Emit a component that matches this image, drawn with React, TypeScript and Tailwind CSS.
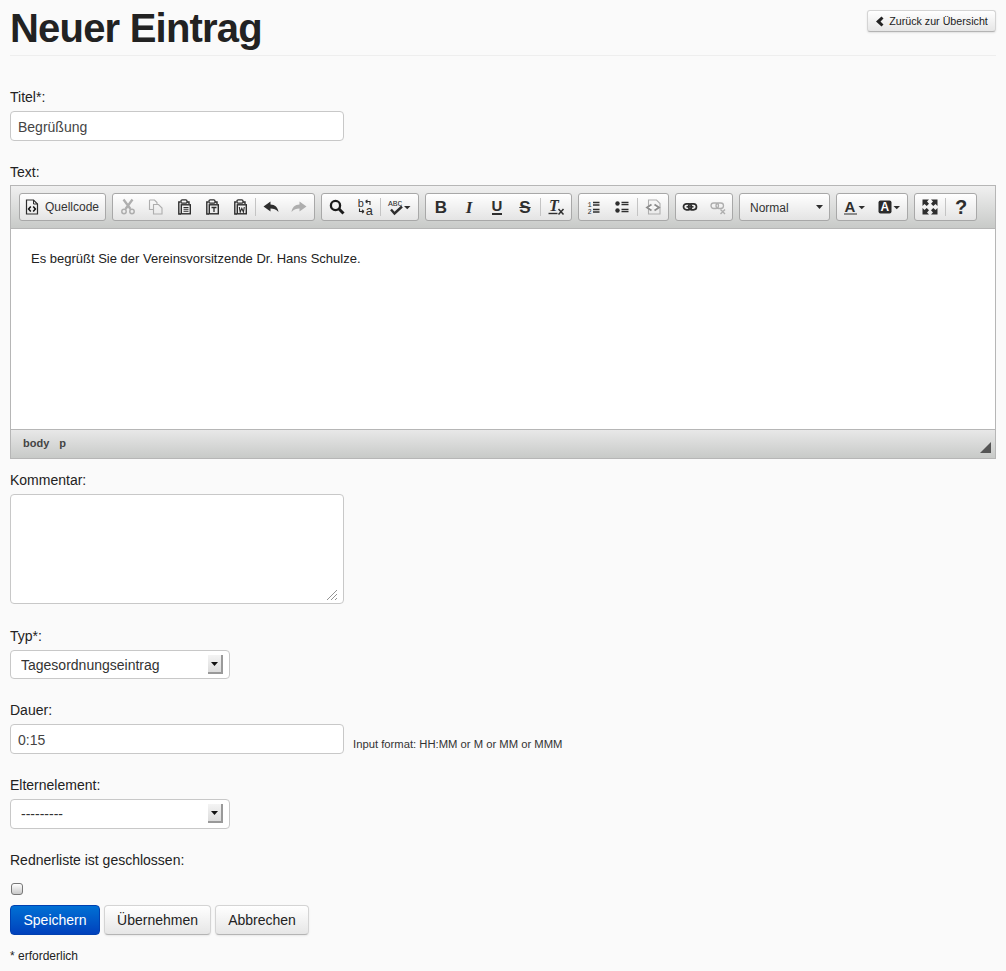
import type { ReactNode } from "react";

const dark = "#2e2e2e";
const gray = "#aeaeae";

function Ico({ children, w = 16 }: { children: ReactNode; w?: number }) {
  return (
    <svg width={w} height={16} viewBox={`0 0 ${w} 16`} fill="none" className="overflow-visible">
      {children}
    </svg>
  );
}

function Btn({ children, wide }: { children: ReactNode; wide?: boolean }) {
  return (
    <span className={`flex h-full items-center justify-center ${wide ? "w-[35px]" : "w-[28px]"}`}>
      {children}
    </span>
  );
}

function Sep() {
  return <span className="mx-px h-[18px] w-px bg-[#c4c4c4]" />;
}

function Group({ children, className = "px-[1px]" }: { children: ReactNode; className?: string }) {
  return (
    <div
      className={`flex h-[28px] items-center rounded-[3px] border border-[#a8a8a8] bg-gradient-to-b from-white to-[#e4e4e4] ${className}`}
    >
      {children}
    </div>
  );
}

function Arrow({ x = 0, y = 8 }: { x?: number; y?: number }) {
  return <path d={`M${x} ${y}h6.500l-3.250 3.300z`} fill={dark} />;
}

function Clipboard({ children }: { children: ReactNode }) {
  return (
    <Ico>
      <path d="M4.500 3H2.800v12H5M11 3h2v2" stroke={dark} strokeWidth="1.400" />
      <rect x="5" y="0.800" width="6" height="3.400" rx="1.200" stroke={dark} strokeWidth="1.300" />
      <rect x="5.300" y="5.800" width="9" height="9" stroke={dark} strokeWidth="1.400" />
      {children}
    </Ico>
  );
}

function Toolbar() {
  return (
    <div className="flex h-[43px] items-center gap-[6px] border-b border-[#b6b6b6] bg-gradient-to-b from-[#f0f0f0] to-[#c8cac8] px-[8px]">
      <Group className="w-[87px] pl-[4px]">
        <Ico>
          <path d="M2.500 1h7l4 4v10h-11z" stroke={dark} strokeWidth="1.200" />
          <path d="M9.500 1v4h4" stroke={dark} strokeWidth="1" />
          <path d="M6.800 7.500 4.600 10l2.200 2.400M9.200 7.500l2.200 2.500-2.200 2.400" stroke="#111" strokeWidth="1.500" />
        </Ico>
        <span className="ml-[5px] text-[12px] leading-none text-[#333]">Quellcode</span>
      </Group>

      <Group>
        <Btn>
          <Ico>
            <path d="M3.500 0.500 10.500 10M12.500 0.500 5.500 10" stroke={gray} strokeWidth="2.300" />
            <circle cx="4" cy="12.500" r="2.200" stroke={gray} strokeWidth="1.500" />
            <circle cx="12" cy="12.500" r="2.200" stroke={gray} strokeWidth="1.500" />
          </Ico>
        </Btn>
        <Btn>
          <Ico>
            <path d="M1.500 1h5l2.500 2.500V5.500M1.500 1v9.500H5" stroke={gray} strokeWidth="1.100" />
            <path d="M5.500 5.500H10.500l3.500 3.500v6H5.500z" stroke={gray} strokeWidth="1.100" />
          </Ico>
        </Btn>
        <Btn>
          <Clipboard>
            <path d="M7.500 8.500h5M7.500 10.300h5M7.500 12.200h5" stroke={dark} strokeWidth="1.100" />
          </Clipboard>
        </Btn>
        <Btn>
          <Clipboard>
            <path d="M7.500 8.500h5M10 8.500v4.500" stroke={dark} strokeWidth="1.300" />
          </Clipboard>
        </Btn>
        <Btn>
          <Clipboard>
            <path d="M7.300 8l.9 5 1.600-3.700L11.400 13l.9-5" stroke={dark} strokeWidth="1.100" />
          </Clipboard>
        </Btn>
        <Sep />
        <Btn>
          <Ico>
            <path d="M7.500 2.500 0.500 7.500l7 5V9.500c3.200 0 5.500.7 8 3.500-.5-4.500-3.500-7.500-8-7.500z" fill={dark} />
          </Ico>
        </Btn>
        <Btn>
          <Ico>
            <path d="M8.500 2.500l7 5-7 5V9.500c-3.200 0-5.500.7-8 3.500.5-4.500 3.500-7.500 8-7.500z" fill={gray} />
          </Ico>
        </Btn>
      </Group>

      <Group>
        <Btn>
          <Ico>
            <circle cx="6.500" cy="6.500" r="4.600" stroke="#1c1c1c" strokeWidth="2.300" />
            <path d="M9.800 9.800 14.500 14.500" stroke="#1c1c1c" strokeWidth="3" />
          </Ico>
        </Btn>
        <Btn>
          <Ico>
            <text x="0.500" y="7.500" fontSize="11" fontFamily="Liberation Mono, monospace" fill={dark}>b</text>
            <text x="8.500" y="16" fontSize="13" fontFamily="Liberation Mono, monospace" fill={dark}>a</text>
            <path d="M8.500 2.500h4.500v3.500M8.500 2.500 10.500 0.800M8.500 2.500l2 1.700" stroke={dark} strokeWidth="1.100" />
            <path d="M7 12.500H2.500V9.500M7 12.500l-2-1.700M7 12.500l-2 1.700" stroke={dark} strokeWidth="1.100" />
          </Ico>
        </Btn>
        <Sep />
        <Btn wide>
          <Ico w={24}>
            <text x="0" y="7" fontSize="8" fontFamily="Liberation Mono, monospace" fill={dark}>ABC</text>
            <path d="M3 10.500 6.500 14.500 14 7.500" stroke={dark} strokeWidth="2.400" />
            <Arrow x={16} y={7} />
          </Ico>
        </Btn>
      </Group>

      <Group>
        <Btn>
          <span className="text-[17px] font-bold leading-none text-[#2e2e2e]">B</span>
        </Btn>
        <Btn>
          <span className="text-[17px] font-bold italic leading-none text-[#2e2e2e] [font-family:'Liberation_Serif',serif]">I</span>
        </Btn>
        <Btn>
          <span className="border-b-2 border-[#2e2e2e] text-[15px] font-bold leading-[14px] text-[#2e2e2e]">U</span>
        </Btn>
        <Btn>
          <span className="relative text-[17px] font-bold leading-none text-[#2e2e2e] line-through">S</span>
        </Btn>
        <Sep />
        <Btn>
          <Ico>
            <text x="1" y="12" fontSize="16" fontWeight="700" fontStyle="italic" fontFamily="Liberation Serif, serif" fill={dark}>T</text>
            <path d="M0.500 14.500h9" stroke={dark} strokeWidth="1.400" />
            <path d="M10.500 10l5 5.500M15.500 10l-5 5.500" stroke={dark} strokeWidth="1.500" />
          </Ico>
        </Btn>
      </Group>

      <Group>
        <Btn>
          <Ico>
            <text x="1.500" y="7.500" fontSize="7" fontFamily="Liberation Mono, monospace" fill={dark}>1</text>
            <text x="1.500" y="14.500" fontSize="7" fontFamily="Liberation Mono, monospace" fill={dark}>2</text>
            <path d="M7 3.500h6.500M7 6h6.500M7 10.500h6.500M7 13h6.500" stroke={dark} strokeWidth="1.300" />
          </Ico>
        </Btn>
        <Btn>
          <Ico>
            <circle cx="3.500" cy="4.500" r="2.200" fill={dark} />
            <circle cx="3.500" cy="11.500" r="2.200" fill={dark} />
            <path d="M7.500 3.500h7M7.500 5.700h7M7.500 10.500h7M7.500 12.700h7" stroke={dark} strokeWidth="1.300" />
          </Ico>
        </Btn>
        <Sep />
        <Btn>
          <Ico>
            <path d="M3.500 1h8l3.500 3.500V15H3.500z" stroke={gray} strokeWidth="1.100" />
            <path d="M6.500 5.500 2 8.500l4.500 3M9.500 5.500l4.500 3-4.500 3" stroke="#8c8c8c" strokeWidth="1.800" fill="#fff" />
          </Ico>
        </Btn>
      </Group>

      <Group className="px-0">
        <Btn>
          <Ico>
            <rect x="1.500" y="4.800" width="8" height="6" rx="3" stroke={dark} strokeWidth="1.700" />
            <rect x="6.500" y="4.800" width="8" height="6" rx="3" stroke={dark} strokeWidth="1.700" />
            <path d="M4.500 7.800h7" stroke={dark} strokeWidth="1.500" />
          </Ico>
        </Btn>
        <Btn>
          <Ico>
            <rect x="1" y="4" width="7.500" height="5.500" rx="2.700" stroke={gray} strokeWidth="1.300" />
            <rect x="6" y="4" width="7.500" height="5.500" rx="2.700" stroke={gray} strokeWidth="1.300" />
            <path d="M10.500 10.500l4.500 4.500M15 10.500 10.500 15" stroke={gray} strokeWidth="1.400" />
          </Ico>
        </Btn>
      </Group>

      <Group className="w-[91px] justify-between pl-[10px] pr-[6px]">
        <span className="pt-[1px] text-[12px] leading-none text-[#333]">Normal</span>
        <svg width="7" height="4" viewBox="0 0 7 4">
          <path d="M0 0h7L3.500 4z" fill={dark} />
        </svg>
      </Group>

      <Group className="px-0">
        <span className="flex h-full w-[35px] items-center justify-center">
          <Ico w={24}>
            <text x="1.500" y="12.500" fontSize="15" fontWeight="700" fontFamily="Liberation Sans, sans-serif" fill={dark}>A</text>
            <path d="M1 15h13" stroke="#808080" strokeWidth="1.800" />
            <Arrow x={15.500} y={7} />
          </Ico>
        </span>
        <span className="flex h-full w-[35px] items-center justify-center">
          <Ico w={24}>
            <rect x="0.500" y="1.500" width="13" height="13" rx="2" fill="#2a2a2a" />
            <text x="2.500" y="12" fontSize="12" fontWeight="700" fontFamily="Liberation Sans, sans-serif" fill="#fff">A</text>
            <Arrow x={15.500} y={7} />
          </Ico>
        </span>
      </Group>

      <Group>
        <Btn>
          <Ico>
            <path d="M0.500 0.500h6.500l-2 2 2 2.200L4.700 7 2.500 4.900l-2 2zM15.500 0.500H9l2 2-2 2.200L11.300 7l2.200-2.100 2 2zM0.500 15.500H7l-2-2 2-2.200L4.700 9l-2.200 2.100-2-2zM15.500 15.500H9l2-2-2-2.200L11.300 9l2.200 2.100 2-2z" fill={dark} />
          </Ico>
        </Btn>
        <Sep />
        <Btn>
          <span className="text-[20px] font-bold leading-none text-[#2e2e2e]">?</span>
        </Btn>
      </Group>
    </div>
  );
}

function SelectBox({ value, className }: { value: string; className: string }) {
  return (
    <div className="relative w-[220px]">
      <select
        defaultValue={value}
        className={`block w-full appearance-none rounded-[4px] border border-[#c8c8c8] bg-white pl-[10px] pt-[1px] text-[14px] text-[#333] ${className}`}
      >
        <option>{value}</option>
      </select>
      <span className="pointer-events-none absolute right-[7px] top-[5px] flex h-[19px] w-[15px] items-center justify-center border-b-2 border-r-2 border-[#999] bg-gradient-to-b from-[#f4f4f4] to-[#dcdcdc]">
        <svg width="7" height="4" viewBox="0 0 7 4">
          <path d="M0 0h7L3.500 4z" fill="#111" />
        </svg>
      </span>
    </div>
  );
}

function Label({ children, className = "" }: { children: ReactNode; className?: string }) {
  return <label className={`block h-[20px] text-[14px] leading-[20px] text-[#222] ${className}`}>{children}</label>;
}

const inputCls = "block h-[30px] w-[334px] rounded-[4px] border border-[#c8c8c8] bg-white px-[7px] pt-[1px] text-[14px] text-[#444]";

export default function App() {
  return (
    <div className="min-h-[971px] bg-[#fafafa] px-[10px] text-[14px] text-[#333] [font-family:'Liberation_Sans',Arial,sans-serif]">
      <header className="flex h-[56px] items-start justify-between border-b border-[#eeeeee]">
        <h1 className="mt-[6px] text-[40px] font-bold leading-[44px] tracking-[-0.8px] text-[#222]">Neuer Eintrag</h1>
        <a className="mt-[10px] flex h-[22px] w-[129px] items-center justify-center gap-[5px] rounded-[3px] border border-[#d4d4d4] border-b-[#b4b4b4] bg-gradient-to-b from-white to-[#e6e6e6] text-[10.700px] text-[#222] shadow-[0_1px_2px_rgba(0,0,0,0.1)]">
          <svg width="9" height="11" viewBox="0 0 9 11">
            <path d="M6.500 0.500 1 5.500l5.500 5L8.500 8.500l-3-3 3-3z" fill="#222" />
          </svg>
          Zurück zur Übersicht
        </a>
      </header>

      <form>
        <Label className="mb-[4px] mt-[31px]">Titel*:</Label>
        <input className={inputCls} defaultValue="Begrüßung" />

        <Label className="mb-[3px] mt-[21px]">Text:</Label>
        <div className="border border-[#b6b6b6] bg-white">
          <Toolbar />
          <div className="h-[200px] px-[20px] pt-[22px] text-[13px] leading-[16px] text-[#222]">
            Es begrüßt Sie der Vereinsvorsitzende Dr. Hans Schulze.
          </div>
          <div className="relative flex h-[29px] items-center gap-[10px] border-t border-[#b6b6b6] bg-gradient-to-b from-[#e8e8e8] to-[#c8cac8] pb-[2px] pl-[12px] text-[11px] font-bold text-[#444]">
            <span>body</span>
            <span>p</span>
            <span className="absolute bottom-[5px] right-[4px] h-0 w-0 border-b-[11px] border-l-[11px] border-b-[#555] border-l-transparent" />
          </div>
        </div>

        <Label className="mb-[4px] mt-[11px]">Kommentar:</Label>
        <div className="relative w-[334px]">
          <textarea className="block h-[110px] w-full resize-none rounded-[4px] border border-[#c8c8c8] bg-white" />
          <svg width="12" height="12" viewBox="0 0 12 12" className="absolute bottom-[3px] right-[6px]">
            <path d="M1 11 11 1M5 11l6-6M9 11l2-2" stroke="#777" strokeWidth="0.800" />
          </svg>
        </div>

        <Label className="mb-[4px] mt-[22px]">Typ*:</Label>
        <SelectBox value="Tagesordnungseintrag" className="h-[29px]" />

        <Label className="mb-[4px] mt-[21px]">Dauer:</Label>
        <div className="flex items-end gap-[9px]">
          <input className={inputCls} defaultValue="0:15" />
          <span className="pb-[3px] text-[11.250px] leading-[14px] text-[#333]">Input format: HH:MM or M or MM or MMM</span>
        </div>

        <Label className="mb-[4px] mt-[21px]">Elternelement:</Label>
        <SelectBox value="---------" className="h-[30px]" />

        <Label className="mt-[21px]">Rednerliste ist geschlossen:</Label>
        <input
          type="checkbox"
          className="ml-px mt-[13px] block h-[12px] w-[12px] appearance-none rounded-[3px] border border-[#777] bg-gradient-to-b from-white to-[#c8c8c8]"
        />

        <div className="mt-[10px] flex gap-[4px]">
          <button type="button" className="h-[30px] w-[90px] rounded-[4px] border border-[#0040b0] bg-gradient-to-b from-[#0070d4] to-[#0040bc] text-[14px] text-white">
            Speichern
          </button>
          <button type="button" className="h-[30px] w-[107px] rounded-[4px] border border-[#d4d4d4] border-b-[#b4b4b4] bg-gradient-to-b from-white to-[#e6e6e6] text-[14px] text-[#222] shadow-[0_1px_2px_rgba(0,0,0,0.08)]">
            Übernehmen
          </button>
          <button type="button" className="h-[30px] w-[94px] rounded-[4px] border border-[#d4d4d4] border-b-[#b4b4b4] bg-gradient-to-b from-white to-[#e6e6e6] text-[14px] text-[#222] shadow-[0_1px_2px_rgba(0,0,0,0.08)]">
            Abbrechen
          </button>
        </div>

        <p className="mt-[13px] text-[12px] leading-[16px] text-[#222]">* erforderlich</p>
      </form>
    </div>
  );
}
